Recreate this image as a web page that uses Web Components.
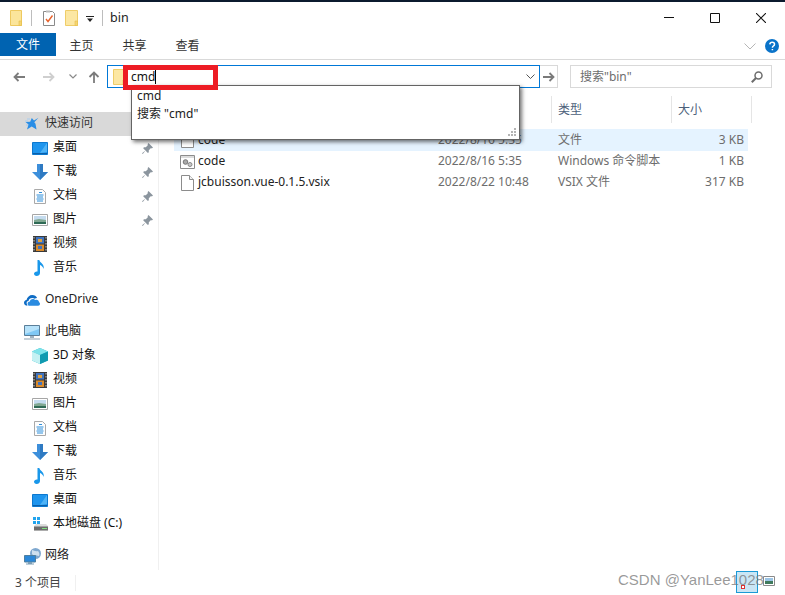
<!DOCTYPE html>
<html lang="zh"><head><meta charset="utf-8"><title>bin</title>
<style>
html,body{margin:0;padding:0;background:#fff}
body{font:12px/16px "Noto Sans","Noto Sans CJK SC",sans-serif;color:#000}
</style></head><body>
<x-explorer>
  <x-titlebar slot="title">bin</x-titlebar>
  <x-ribbon slot="ribbon"></x-ribbon>
  <x-addressbar slot="address"></x-addressbar>
  <x-sidebar slot="side">
    <x-nav icon="star" top selected>快速访问</x-nav>
    <x-nav icon="desktop" pinned>桌面</x-nav>
    <x-nav icon="down" pinned>下载</x-nav>
    <x-nav icon="doc" pinned>文档</x-nav>
    <x-nav icon="pic" pinned>图片</x-nav>
    <x-nav icon="film">视频</x-nav>
    <x-nav icon="music" last>音乐</x-nav>
    <x-nav icon="cloud" top last>OneDrive</x-nav>
    <x-nav icon="pc" top>此电脑</x-nav>
    <x-nav icon="cube">3D 对象</x-nav>
    <x-nav icon="film">视频</x-nav>
    <x-nav icon="pic">图片</x-nav>
    <x-nav icon="doc">文档</x-nav>
    <x-nav icon="down">下载</x-nav>
    <x-nav icon="music">音乐</x-nav>
    <x-nav icon="desktop">桌面</x-nav>
    <x-nav icon="disk" last>本地磁盘 (C:)</x-nav>
    <x-nav icon="net" top>网络</x-nav>
  </x-sidebar>
  <x-filelist slot="files">
    <x-file icon="file" date="2022/8/16 5:35" type="文件" size="3 KB" selected>code</x-file>
    <x-file icon="script" date="2022/8/16 5:35" type="Windows 命令脚本" size="1 KB">code</x-file>
    <x-file icon="file" date="2022/8/22 10:48" type="VSIX 文件" size="317 KB">jcbuisson.vue-0.1.5.vsix</x-file>
  </x-filelist>
  <x-status slot="status">3 个项目</x-status>
  <x-suggest slot="over"></x-suggest>
  <x-mark slot="over"></x-mark>
</x-explorer>
<script>
const ICONS={
folder:[12,16,'<path d="M.5.5h11v15H.5z" fill="#fbe59b" stroke="#eec95f"/><path d="M9 11h2.5v4.5H9z" fill="#f5d672" stroke="#e6bd4c" stroke-width=".6"/>'],
folderwide:[13,16,'<path d="M.5.5h12v15H.5z" fill="#fce7a3" stroke="#efcd68"/><path d="M10 11h2.500v4.500H10z" fill="#f5d672" stroke="#e6bd4c" stroke-width=".6"/>'],
check:[12,16,'<path d="M.5 1.5h9l2 2v12H.5z" fill="#fff" stroke="#8a8a8a"/><path d="M3 9l2 2.5L9.5 5.5" fill="none" stroke="#e8622c" stroke-width="1.4"/><path d="M3 .5h4v2H3z" fill="#bbb"/>'],
star:[14,14,'<path d="M13.5.8L9.3 5.2l1.2 1.5 1 5.8-4.8-3L2 12.6l1.5-5L.5 5l4.7-.2L6.8 1 9 3.5z" fill="#2a8ee6"/><path d="M2 2h3M0 4h3M1 8h2" stroke="#a8cdf0"/>'],
desktop:[16,13,'<path d="M.5.5h15v12H.5z" fill="#1e95ee" stroke="#0c78cf"/><path d="M1 11h14v1H1z" fill="#0b5fa8"/><path d="M15 1v9L8 11z" fill="#4fb3f6"/>'],
down:[16,16,'<path d="M5 0h6v8h5l-8 8-8-8h5z" fill="#3d8fdb"/><path d="M8 0h3v8h5l-8 8z" fill="#2f7ac2"/>'],
doc:[12,15,'<path d="M.5.5h8l3 3v11H.5z" fill="#fdfdfd" stroke="#a9a9a9"/><path d="M5 3.5h3M2.5 6h7M3 8h6M2.5 10h7M3 12h6" stroke="#2d8fdc"/>'],
pic:[16,12,'<path d="M.5.5h15v11H.5z" fill="#fff" stroke="#a6a6a6"/><path d="M2 2h12v4H2z" fill="#c4dbee"/><path d="M2 6l5-1 7 1v2H2z" fill="#81a892"/><path d="M2 8h12v2H2z" fill="#2f6a55"/>'],
film:[14,16,'<path d="M0 0h14v16H0z" fill="#3a3a3a"/><path d="M3 1h8v6.500H3z" fill="#3f73bf"/><path d="M3 8.500h8V15H3z" fill="#d98a2b"/><path d="M5 3h4v3H5z" fill="#e0a13c"/><path d="M5 10h4v3H5z" fill="#3f73bf"/><path d="M1 1v14M13 1v14" stroke="#c8c8c8" stroke-dasharray="1.500 1.500"/>'],
music:[12,16,'<path d="M3.500 0h1.800c.5 3 5.700 4 4.200 9-.4-2-2-3.500-3.500-4V13c0 1.800-1.700 3-3.300 3C1 16 0 15 0 13.800c0-1.600 1.700-2.600 3.500-2.300z" fill="#1997ea"/>'],
cloud:[16,11,'<path d="M3.500 10.800C1.500 10.800 0 9.500 0 7.800c0-1.500 1-2.600 2.500-2.800C3.200 2 5.500 0 8.300 0c2.200 0 4 1.200 4.800 3-.9 0-1.800.3-2.400.8-.7-.5-1.500-.7-2.400-.7-2 0-3.500 1.300-3.800 3C3 6.300 2.500 7.400 2.700 8.500c.1 1 .7 1.800.8 2.300z" fill="#0f6cc4"/><path d="M5 10.800c-1-.4-1.400-1.200-1.400-2.100 0-1.200 1-2.100 2.200-2.100.2-1.600 1.500-2.700 3-2.700 1 0 1.900.5 2.500 1.200.4-.2.800-.3 1.200-.3 1.400 0 2.500 1 2.500 2.500.6.200 1 .8 1 1.500 0 1.100-.7 2-1.900 2z" fill="#2a8be0"/>'],
pc:[16,15,'<path d="M.5.500h15v10H.5z" fill="#7fc8f5" stroke="#5b7f99"/><path d="M1 1h14v3L1 9z" fill="#b6e2fa"/><path d="M6 11h4v2H6z" fill="#9fb2c0"/><path d="M0 13.500h16v1H0z" fill="#8aa0b0"/>'],
cube:[16,16,'<path d="M8 0l8 3.500v9L8 16 0 12.500v-9z" fill="#23b8c9"/><path d="M8 0l8 3.500L8 7 0 3.500z" fill="#7fe3ea"/><path d="M0 3.500L8 7v9L0 12.500z" fill="#c4f1f3"/><path d="M8 7l8-3.500v9L8 16z" fill="#119ab0"/>'],
disk:[15,14,'<path d="M0 0h3v3H0zM4 0h3v3H4zM0 4h3v3H0zM4 4h3v3H4z" fill="#22a4ee"/><path d="M1 9l2-2h10l2 2v4.500H1z" fill="#dcdcdc"/><path d="M1 9.500h14v4H1z" fill="#6d6d6d"/><path d="M9 11h5v1H9z" fill="#7fe07f"/>'],
net:[17,17,'<circle cx="11.500" cy="5.500" r="5.500" fill="#7fa8cf"/><path d="M8 2c2 0 3 2 6 1 1 1 2 3 1 5-3-1-6 0-7-2z" fill="#cfe0ee"/><path d="M.5 7.500h11v6.500H.5z" fill="#2b87d8" stroke="#4f7f9f"/><path d="M4 14h4v1.500H4zM2 15.500h8v1H2z" fill="#7b9db5"/>'],
pin:[11,11,'<path d="M6.500 0L11 4.500 9.800 5.500 9 5 6.800 7.200 6.800 9.500 5.500 9.800 3.500 7.500 0.800 11 0 10.200 3.500 7.500 1.300 5.400 1.800 4.200 3.800 4.200 6 2 5.500 1.200z" fill="#8b959e"/>'],
file:[13,16,'<path d="M.5.500h8l4 4v11H.5z" fill="#fff" stroke="#8c8c8c"/><path d="M8.500.500v4h4" fill="#f2f2f2" stroke="#8c8c8c"/>'],
script:[15,14,'<path d="M.5.500h14v13H.5z" fill="#fff" stroke="#8c8c8c"/><path d="M1 1h13v2H1z" fill="#dcdcdc"/><circle cx="5.500" cy="7" r="2.300" fill="#aaa" stroke="#777"/><circle cx="10" cy="9.500" r="2" fill="#c8c8c8" stroke="#888"/>'],
back:[12,10,'<path d="M12 5H1.500M5.500 1L1.500 5l4 4" fill="none" stroke="#7c7c7c" stroke-width="1.800"/>'],
fwd:[12,10,'<path d="M0 5h10.500M6.500 1l4 4-4 4" fill="none" stroke="#cfcfcf" stroke-width="1.800"/>'],
up:[12,12,'<path d="M6 12V1.500M1.500 6L6 1.500 10.500 6" fill="none" stroke="#7c7c7c" stroke-width="1.800"/>'],
gofwd:[12,10,'<path d="M0 5h10.500M6.500 1l4 4-4 4" fill="none" stroke="#7a7a7a" stroke-width="1.800"/>'],
chev:[8,5,'<path d="M.5.500L4 4 7.500.500" fill="none" stroke="#8a8a8a" stroke-width="1.200"/>'],
chevd:[9,5,'<path d="M.5.500L4.500 4.500 8.500.500" fill="none" stroke="#555"/>'],
chevl:[12,7,'<path d="M.5.500L6 6l5.500-5.500" fill="none" stroke="#b5b5b5"/>'],
qat:[8,6,'<path d="M0 0h8v1H0zM1 2.500h6L4 6z" fill="#222"/>'],
mag:[12,12,'<circle cx="7.500" cy="4.500" r="3.500" fill="none" stroke="#6d6d6d" stroke-width="1.500"/><path d="M5 7L.8 11.200" stroke="#6d6d6d" stroke-width="2"/>'],
min:[10,1,'<path d="M0 0h10v1H0z" fill="#111"/>'],
max:[10,10,'<path d="M.5.500h9v9h-9z" fill="none" stroke="#111"/>'],
close:[10,10,'<path d="M0 0l10 10M10 0L0 10" stroke="#111" stroke-width="1.050"/>'],
help:[14,14,'<circle cx="7" cy="7" r="7" fill="#0a73c9"/><path d="M4.800 5.300C5 3.900 6 3.200 7.200 3.200c1.400 0 2.300.8 2.300 2 0 1-.6 1.500-1.300 2-.6.400-.8.700-.8 1.500M7.400 10v1.300" fill="none" stroke="#fff" stroke-width="1.500"/>'],
grip:[10,10,'<path d="M7 1h2v2H7zM4 4h2v2H4zM7 4h2v2H7zM1 7h2v2H1zM4 7h2v2H4zM7 7h2v2H7z" fill="#b4b4b4"/>'],
thumb:[12,10,'<path d="M.5.500h11v9H.5z" fill="#fff" stroke="#8a8a8a"/><path d="M2 2h8v3H2z" fill="#9cc5e6"/><path d="M2 5h8v3H2z" fill="#3f7a5c"/>']
};
customElements.define('x-icon',class extends HTMLElement{
  static get observedAttributes(){return ['name'];}
  constructor(){super();this.attachShadow({mode:'open'});}
  attributeChangedCallback(){
    const d=ICONS[this.getAttribute('name')];
    if(!d)return;
    const [w,h,b]=d;
    this.shadowRoot.innerHTML=`<style>:host{display:inline-flex;flex:none}svg{display:block}</style><svg xmlns="http://www.w3.org/2000/svg" width="${w}" height="${h}" viewBox="0 0 ${w} ${h}">${b}</svg>`;
  }
});
function def(name,html,init){
  customElements.define(name,class extends HTMLElement{
    constructor(){super();this.attachShadow({mode:'open'}).innerHTML=html;}
    connectedCallback(){if(init)init.call(this,this.shadowRoot);}
  });
}
def('x-explorer',`<style>
:host{display:flex;flex-direction:column;position:relative;width:785px;height:595px;overflow:hidden;background:#fff}
.top{height:2px;background:#0b1a2e;flex:none}
.main{flex:1;display:flex;min-height:0}
</style><div class="top"></div><slot name="title"></slot><slot name="ribbon"></slot><slot name="address"></slot>
<div class="main"><slot name="side"></slot><slot name="files"></slot></div><slot name="status"></slot><slot name="over"></slot>`);
def('x-titlebar',`<style>
:host{display:flex;align-items:center;height:31px;flex:none;color:#222;padding:0 1px 0 10px;box-sizing:border-box}
.sep{width:1px;height:16px;background:#bdbdbd;flex:none}
.t{margin-left:7px;font-size:12.5px}
.sp{flex:1}
.b{width:46px;display:flex;justify-content:center;flex:none}
</style><x-icon name="folder"></x-icon><span class="sep" style="margin:0 11px 0 9px"></span><x-icon name="check"></x-icon>
<x-icon name="folderwide" style="margin-left:10px"></x-icon><x-icon name="qat" style="margin:3px 0 0 8px"></x-icon><span class="sep" style="margin-left:8px"></span>
<span class="t"><slot></slot></span><span class="sp"></span>
<span class="b"><x-icon name="min"></x-icon></span><span class="b"><x-icon name="max"></x-icon></span><span class="b"><x-icon name="close"></x-icon></span>`);
def('x-ribbon',`<style>
:host{display:flex;height:27px;flex:none;box-sizing:border-box;border-bottom:1px solid #d9d9d9;color:#333}
.f{width:56px;height:23px;background:#0063b1;color:#fff;display:flex;align-items:center;justify-content:center;flex:none}
.t{width:53px;height:25px;display:flex;align-items:center;justify-content:center;flex:none}
.sp{flex:1}.r{display:flex;align-items:center;gap:9px;padding:0 6px 0 0;height:26px}
</style><div class="f">文件</div><div class="t" style="margin-left:-1px">主页</div><div class="t">共享</div><div class="t">查看</div><span class="sp"></span>
<div class="r"><x-icon name="chevl"></x-icon><x-icon name="help"></x-icon></div>`);
def('x-addressbar',`<style>
:host{display:flex;align-items:flex-start;height:36px;flex:none;box-sizing:border-box;padding-top:5px}
.nav{display:flex;align-items:center;height:23px;flex:none}
.addr{width:433px;height:23px;box-sizing:border-box;border:1px solid #0078d7;display:flex;align-items:center;padding:0 2px 0 5px;flex:none;background:#fff}
.cmd{margin-left:5px;color:#111;display:flex;align-items:center}
.caret{width:1px;height:15px;background:#000}
.sp{flex:1}
.go{width:18px;height:23px;box-sizing:border-box;border:1px solid #d9d9d9;border-left:0;display:flex;align-items:center;justify-content:center;flex:none}
.search{width:202px;height:23px;margin-left:12px;box-sizing:border-box;border:1px solid #d9d9d9;display:flex;align-items:center;padding:0 8px 0 9px;color:#6d6d6d;flex:none}
</style><div class="nav" style="padding-left:13px;width:107px;box-sizing:border-box"><x-icon name="back"></x-icon><x-icon name="fwd" style="margin-left:18px"></x-icon><x-icon name="chev" style="margin-left:14px"></x-icon><x-icon name="up" style="margin-left:11px"></x-icon></div>
<div class="addr"><x-icon name="folderwide"></x-icon><span class="cmd">cmd<i class="caret"></i></span><span class="sp"></span><x-icon name="chevd" style="margin-right:2px"></x-icon></div>
<div class="go"><x-icon name="gofwd"></x-icon></div>
<div class="search"><span>搜索"bin"</span><span class="sp"></span><x-icon name="mag"></x-icon></div>`);
def('x-sidebar',`<style>
:host{display:block;width:159px;flex:none;box-sizing:border-box;border-right:1px solid #f0f0f0;padding-top:16px;overflow:hidden}
</style><slot></slot>`);
def('x-nav',`<style>
:host{display:flex;align-items:center;height:24px;box-sizing:border-box;padding-left:32px;color:#111}
:host([top]){padding-left:24px;color:#222}
:host([selected]){background:#d9d9d9;color:#333}
:host([last]){margin-bottom:8px}
.i{width:16px;height:16px;display:flex;align-items:center;justify-content:center;flex:none;margin-right:5px}
.l{margin-bottom:2px}
.pin{margin-left:auto;margin-right:5px}
</style><span class="i"><x-icon></x-icon></span><span class="l"><slot></slot></span><x-icon class="pin"></x-icon>`,function(r){
  r.querySelector('.i x-icon').setAttribute('name',this.getAttribute('icon'));
  const p=r.querySelector('.pin');
  if(this.hasAttribute('pinned'))p.setAttribute('name','pin');else p.remove();
});
def('x-filelist',`<style>
:host{display:block;flex:1;min-width:0;padding-left:15px;box-sizing:border-box}
.h{display:flex;height:27px;margin-bottom:6px;color:#4c607a}
.c{display:flex;align-items:center;box-sizing:border-box;border-right:1px solid #e5e5e5;padding-left:6px;flex:none}
</style><div class="h"><span class="c" style="width:378px"></span><span class="c" style="width:120px">类型</span><span class="c" style="width:80px">大小</span></div><slot></slot>`);
def('x-file',`<style>
:host{display:flex;align-items:center;height:21px;width:574px;color:#6d6d6d}
:host([selected]){background:#e5f3ff;height:22px}
.n{width:264px;display:flex;align-items:center;color:#222;flex:none;box-sizing:border-box;padding-left:5px;overflow:hidden}
.n x-icon{width:16px;margin-right:3px;justify-content:center}
.x,.d,.t,.s{margin-bottom:2px}
:host([selected]) .x,:host([selected]) .d,:host([selected]) .t,:host([selected]) .s{margin-bottom:0}
.d{width:120px;flex:none}.t{width:110px;flex:none}.s{flex:1;text-align:right;padding-right:4px}
</style><div class="n"><x-icon></x-icon><span class="x"><slot></slot></span></div><span class="d"></span><span class="t"></span><span class="s"></span>`,function(r){
  r.querySelector('.n x-icon').setAttribute('name',this.getAttribute('icon'));
  r.querySelector('.d').textContent=this.getAttribute('date');
  r.querySelector('.t').textContent=this.getAttribute('type');
  r.querySelector('.s').textContent=this.getAttribute('size');
});
def('x-status',`<style>
:host{display:flex;align-items:center;height:25px;flex:none;color:#444;padding-left:15px;box-sizing:border-box}
.s{width:1px;height:16px;background:#f0f0f0;margin-left:14px}
</style><slot></slot><span class="s"></span>`);
def('x-suggest',`<style>
:host{display:block}
.box{position:absolute;left:131px;top:85px;width:389px;height:55px;box-sizing:border-box;border:1px solid #646464;background:#fff;box-shadow:2px 2px 4px rgba(0,0,0,.55);color:#222;padding:1px 5px}
.box div{height:18px;line-height:18px}
.g{position:absolute;right:2px;bottom:2px}
.red{position:absolute;left:123px;top:65px;width:95px;height:25px;box-sizing:border-box;border:5px solid #ed1c24}
</style><div class="box"><div>cmd</div><div>搜索 "cmd"</div><x-icon class="g" name="grip"></x-icon></div><div class="red"></div>`);
def('x-mark',`<style>
:host{display:block}
.w{position:absolute;left:618px;top:570px;font:15px/20px "Liberation Sans",sans-serif;color:rgba(120,120,120,.75);white-space:nowrap}
.b{position:absolute;left:736px;top:571px;width:22px;height:22px;box-sizing:border-box;border:1px solid #1b9ad6;background:rgba(150,205,235,.5)}
.d{position:absolute;left:741px;top:585px;width:4px;height:4px;background:#fff;border:1px solid #d33;box-sizing:border-box}
.p{position:absolute;left:763px;top:576px}
</style><div class="b"></div><div class="d"></div><x-icon class="p" name="thumb"></x-icon><div class="w">CSDN @YanLee1028</div>`);
</script>
</body></html>
